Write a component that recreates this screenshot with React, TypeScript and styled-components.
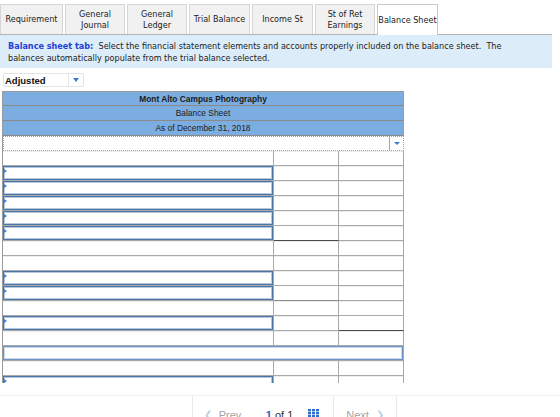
import React from "react";
import styled, { createGlobalStyle } from "styled-components";

type RowKind = "plain" | "input" | "wide";
type Rule = "dark" | "gray";

interface SheetRow {
	kind: RowKind;
	rule2?: Rule;
	rule3?: Rule;
}

const GlobalStyle = createGlobalStyle`
	html, body {
		margin: 0;
		padding: 0;
		background: #fff;
	}
	body {
		font-family: "DejaVu Sans", Verdana, sans-serif;
		color: #222;
	}
`;

const Page = styled.div`
	width: 560px;
	height: 417px;
	display: flex;
	flex-direction: column;
	overflow: hidden;
`;

const Main = styled.div`
	height: 383px;
	flex-shrink: 0;
	overflow: hidden;
`;

const TabBar = styled.div`
	display: flex;
	gap: 2px;
	padding-top: 4px;
	height: 34px;
	box-sizing: border-box;
	position: relative;
	z-index: 1;
`;

const Tab = styled.div<{ $active?: boolean; $width: number }>`
	width: ${(p) => p.$width}px;
	height: ${(p) => (p.$active ? 31 : 30)}px;
	box-sizing: border-box;
	display: flex;
	align-items: center;
	justify-content: center;
	text-align: center;
	font-size: 8.1px;
	line-height: 10.5px;
	color: #222;
	background: ${(p) => (p.$active ? "#fff" : "#f1f1f1")};
	border: 1px solid ${(p) => (p.$active ? "#c8c8c8" : "#d6d6d6")};
	border-bottom: none;
	white-space: pre-line;
`;

const InfoBox = styled.div`
	width: 552px;
	box-sizing: border-box;
	height: 34px;
	background: #dcecf8;
	border-top: 1px solid #b4b4b4;
	padding: 5px 8px 0;
	font-size: 8.1px;
	line-height: 12px;
	color: #222;
`;

const Lead = styled.span`
	color: #1f3fd6;
	font-weight: bold;
`;

const Select = styled.div`
	margin: 5px 0 4px 3px;
	width: 81px;
	height: 14px;
	box-sizing: border-box;
	border: 1px solid #e4e4e4;
	border-radius: 2px;
	display: flex;
	align-items: center;
	font-family: "Liberation Sans", Arial, sans-serif;
	font-weight: bold;
	font-size: 9.5px;
	color: #111;
`;

const SelectLabel = styled.span`
	flex: 1;
	padding-left: 1px;
`;

const SelectArrow = styled.span`
	width: 14px;
	height: 100%;
	border-left: 1px solid #e4e4e4;
	display: flex;
	align-items: center;
	justify-content: center;
`;

const Caret = styled.span`
	width: 0;
	height: 0;
	border-left: 3.5px solid transparent;
	border-right: 3.5px solid transparent;
	border-top: 4px solid #3b7bd1;
`;

const Sheet = styled.div`
	margin-left: 2px;
	width: 402px;
	box-sizing: border-box;
	border-left: 1px solid #9a9a9a;
	font-family: "Liberation Sans", Arial, sans-serif;
`;

const HeadRow = styled.div<{ $bold?: boolean; $first?: boolean }>`
	height: 15px;
	box-sizing: border-box;
	background: #7badE0;
	border-top: ${(p) => (p.$first ? "1px solid #9a9a9a" : "none")};
	border-bottom: 1px solid #8a8a8a;
	border-right: 1px solid #9a9a9a;
	display: flex;
	align-items: center;
	justify-content: center;
	font-size: 8.4px;
	font-weight: ${(p) => (p.$bold ? "bold" : "normal")};
	color: #1d1d1d;
`;

const PickRow = styled.div`
	height: 15px;
	box-sizing: border-box;
	border: 1px dotted #7aa9e0;
	display: flex;
`;

const PickField = styled.div`
	flex: 1;
	border-right: 1px solid #a8a8a8;
`;

const PickButton = styled.div`
	width: 13px;
	display: flex;
	align-items: center;
	justify-content: center;
`;

const SmallCaret = styled(Caret)`
	border-left-width: 3px;
	border-right-width: 3px;
	border-top-width: 3px;
`;

const DataRow = styled.div`
	display: grid;
	grid-template-columns: 271px 65px 65px;
	height: 15px;
`;

const Cell = styled.div<{ $rule?: Rule }>`
	box-sizing: border-box;
	border-right: 1px solid #a9a9a9;
	border-bottom: ${(p) =>
		p.$rule === "dark"
			? "1px solid #4a4a4a"
			: p.$rule === "gray"
			? "1px solid #8c8c8c"
			: "1px solid #a9a9a9"};
	box-shadow: ${(p) => (p.$rule ? "none" : "inset 0 1px 0 #ececec")};
`;

const WideCell = styled.div`
	grid-column: 1 / -1;
	box-sizing: border-box;
	border-right: 1px solid #a9a9a9;
	border-bottom: 1px solid #a9a9a9;
`;

const InputBox = styled.div<{ $soft?: boolean }>`
	position: relative;
	height: 100%;
	box-sizing: border-box;
	border: ${(p) => (p.$soft ? "1px solid #6f93c2" : "1.5px solid #4c76a8")};
	box-shadow: ${(p) =>
		p.$soft ? "inset 0 0 0 1px #c9d8ea" : "inset 0 0 0 1px #b3c8e0"};
	background: #fff;
`;

const Marker = styled.span`
	position: absolute;
	left: 0;
	top: 2px;
	width: 0;
	height: 0;
	border-top: 2px solid transparent;
	border-bottom: 2px solid transparent;
	border-left: 3px solid #3f7fd0;
`;

const Footer = styled.div`
	margin-top: 12px;
	border-top: 1px solid #f0f0f0;
	display: flex;
	padding-left: 192px;
	height: 22px;
	font-family: "Liberation Sans", Arial, sans-serif;
	font-size: 11px;
`;

const PageButton = styled.div<{ $width: number }>`
	width: ${(p) => p.$width}px;
	box-sizing: border-box;
	border-left: 1px solid #eaeaea;
	display: flex;
	justify-content: center;
	align-items: flex-start;
	padding-top: 13px;
	gap: 7px;
	color: #a4a4a4;
	&:last-child {
		border-right: 1px solid #eaeaea;
	}
`;

const Counter = styled.div`
	width: 81px;
	display: flex;
	justify-content: center;
	align-items: flex-start;
	padding-top: 13px;
	gap: 5px;
	color: #333;
`;

const Current = styled.span`
	color: #2a66c0;
	font-weight: bold;
`;

const Chevron = styled.span`
	color: #c0cfe0;
	font-size: 10px;
`;

const GridIcon = () => (
	<svg width="11" height="9" viewBox="0 0 11 9" style={{ marginLeft: 10, marginTop: 0 }}>
		{[0, 4, 8].map((x) =>
			[0, 3, 6].map((y) => (
				<rect key={`${x}-${y}`} x={x} y={y} width="3" height="2.4" fill="#2f6fcf" />
			))
		)}
	</svg>
);

const tabs = [
	{ label: "Requirement", width: 63 },
	{ label: "General\nJournal", width: 60 },
	{ label: "General\nLedger", width: 60 },
	{ label: "Trial Balance", width: 61 },
	{ label: "Income St", width: 61 },
	{ label: "St of Ret\nEarnings", width: 60 },
	{ label: "Balance Sheet", width: 61, active: true },
];

const rows: SheetRow[] = [
	{ kind: "plain" },
	{ kind: "input" },
	{ kind: "input" },
	{ kind: "input" },
	{ kind: "input" },
	{ kind: "input", rule2: "dark" },
	{ kind: "plain" },
	{ kind: "plain" },
	{ kind: "input" },
	{ kind: "input", rule2: "gray" },
	{ kind: "plain" },
	{ kind: "input", rule3: "dark" },
	{ kind: "plain" },
	{ kind: "wide" },
	{ kind: "plain" },
	{ kind: "input" },
];

const SheetLine = ({ kind, rule2, rule3 }: SheetRow) => {
	if (kind === "wide") {
		return (
			<DataRow>
				<WideCell>
					<InputBox $soft />
				</WideCell>
			</DataRow>
		);
	}
	return (
		<DataRow>
			<Cell>
				{kind === "input" && (
					<InputBox>
						<Marker />
					</InputBox>
				)}
			</Cell>
			<Cell $rule={rule2} />
			<Cell $rule={rule3} />
		</DataRow>
	);
};

export default function App() {
	return (
		<Page>
			<GlobalStyle />
			<Main>
				<TabBar>
					{tabs.map((t) => (
						<Tab key={t.label} $width={t.width} $active={t.active}>
							{t.label}
						</Tab>
					))}
				</TabBar>
				<InfoBox>
					<Lead>Balance sheet tab:</Lead>&nbsp; Select the financial statement elements and
					accounts properly included on the balance sheet.&nbsp; The
					<br />
					balances automatically populate from the trial balance selected.
				</InfoBox>
				<Select>
					<SelectLabel>Adjusted</SelectLabel>
					<SelectArrow>
						<Caret />
					</SelectArrow>
				</Select>
				<Sheet>
					<HeadRow $first $bold>
						Mont Alto Campus Photography
					</HeadRow>
					<HeadRow>Balance Sheet</HeadRow>
					<HeadRow>As of December 31, 2018</HeadRow>
					<PickRow>
						<PickField />
						<PickButton>
							<SmallCaret />
						</PickButton>
					</PickRow>
					{rows.map((row, index) => (
						<SheetLine {...row} key={`ROW_${index}`} />
					))}
				</Sheet>
			</Main>
			<Footer>
				<PageButton $width={60}>
					<Chevron>&#10094;</Chevron>
					<span>Prev</span>
				</PageButton>
				<Counter>
					<span>
						<Current>1</Current> of 1
					</span>
					<GridIcon />
				</Counter>
				<PageButton $width={64}>
					<span>Next</span>
					<Chevron>&#10095;</Chevron>
				</PageButton>
			</Footer>
		</Page>
	);
}
